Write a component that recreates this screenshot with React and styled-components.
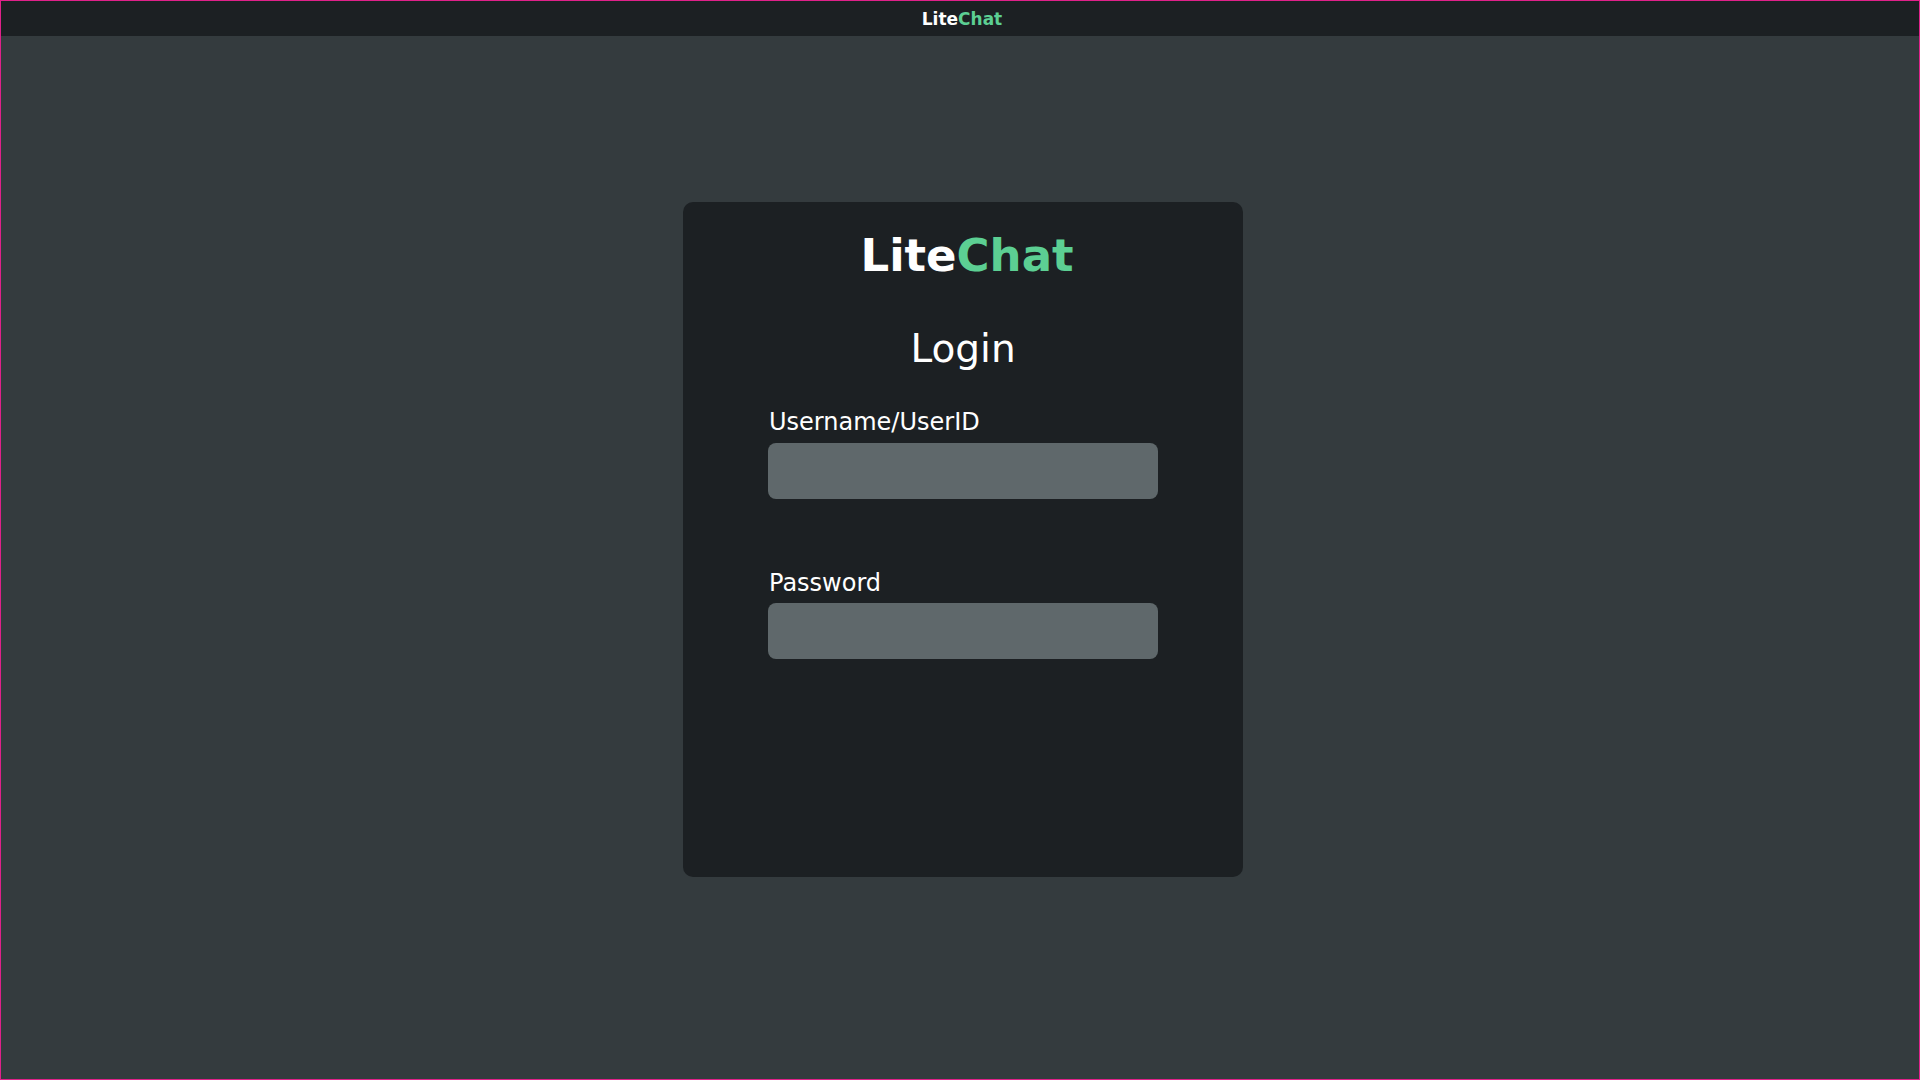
import styled, { createGlobalStyle } from 'styled-components';

const GlobalStyle = createGlobalStyle`
  html, body {
    margin: 0;
    padding: 0;
    background: #343b3e;
  }
  * { box-sizing: border-box; }
`;

const Page = styled.div`
  width: 100vw;
  height: 100vh;
  border: 1px solid #e0218a;
  display: flex;
  flex-direction: column;
  background: #343b3e;
  font-family: 'DejaVu Sans', 'Liberation Sans', sans-serif;
  color: #ffffff;
  overflow: hidden;
`;

const TopBar = styled.header`
  height: 35px;
  flex-shrink: 0;
  background: #1c2023;
  display: flex;
  align-items: center;
  justify-content: center;
  font-size: 17px;
  font-weight: bold;
  padding-left: 4px;
`;

const Green = styled.span`
  color: #5ccf93;
`;

const Main = styled.main`
  flex: 1;
  display: flex;
  align-items: center;
  justify-content: center;
  padding: 0 0 36px 6px;
`;

const Card = styled.div`
  width: 560px;
  height: 675px;
  background: #1c2023;
  border-radius: 10px;
  display: flex;
  flex-direction: column;
  align-items: center;
  padding-top: 27px;
`;

const Brand = styled.h1`
  margin: 0;
  font-size: 45px;
  font-weight: bold;
  line-height: 1.2;
  padding-left: 8px;
`;

const Title = styled.h2`
  margin: 43px 0 0;
  font-size: 39px;
  font-weight: normal;
  line-height: 1.2;
`;

const Form = styled.form`
  width: 390px;
  margin-top: 35px;
  display: flex;
  flex-direction: column;
  gap: 70px;
`;

const Field = styled.div`
  display: flex;
  flex-direction: column;
  gap: 6px;
`;

const Label = styled.label`
  font-size: 24px;
  line-height: 1.2;
  padding-left: 1px;
`;

const Input = styled.input`
  height: 56px;
  width: 100%;
  border: none;
  outline: none;
  border-radius: 8px;
  background: #5f686b;
  color: #ffffff;
  font-size: 20px;
  padding: 0 14px;
  font-family: inherit;
`;

export default function App() {
  return (
    <>
      <GlobalStyle />
      <Page>
        <TopBar>
          Lite<Green>Chat</Green>
        </TopBar>
        <Main>
          <Card>
            <Brand>
              Lite<Green>Chat</Green>
            </Brand>
            <Title>Login</Title>
            <Form onSubmit={(e) => e.preventDefault()}>
              <Field>
                <Label htmlFor="user">Username/UserID</Label>
                <Input id="user" type="text" />
              </Field>
              <Field>
                <Label htmlFor="pass">Password</Label>
                <Input id="pass" type="password" />
              </Field>
            </Form>
          </Card>
        </Main>
      </Page>
    </>
  );
}
